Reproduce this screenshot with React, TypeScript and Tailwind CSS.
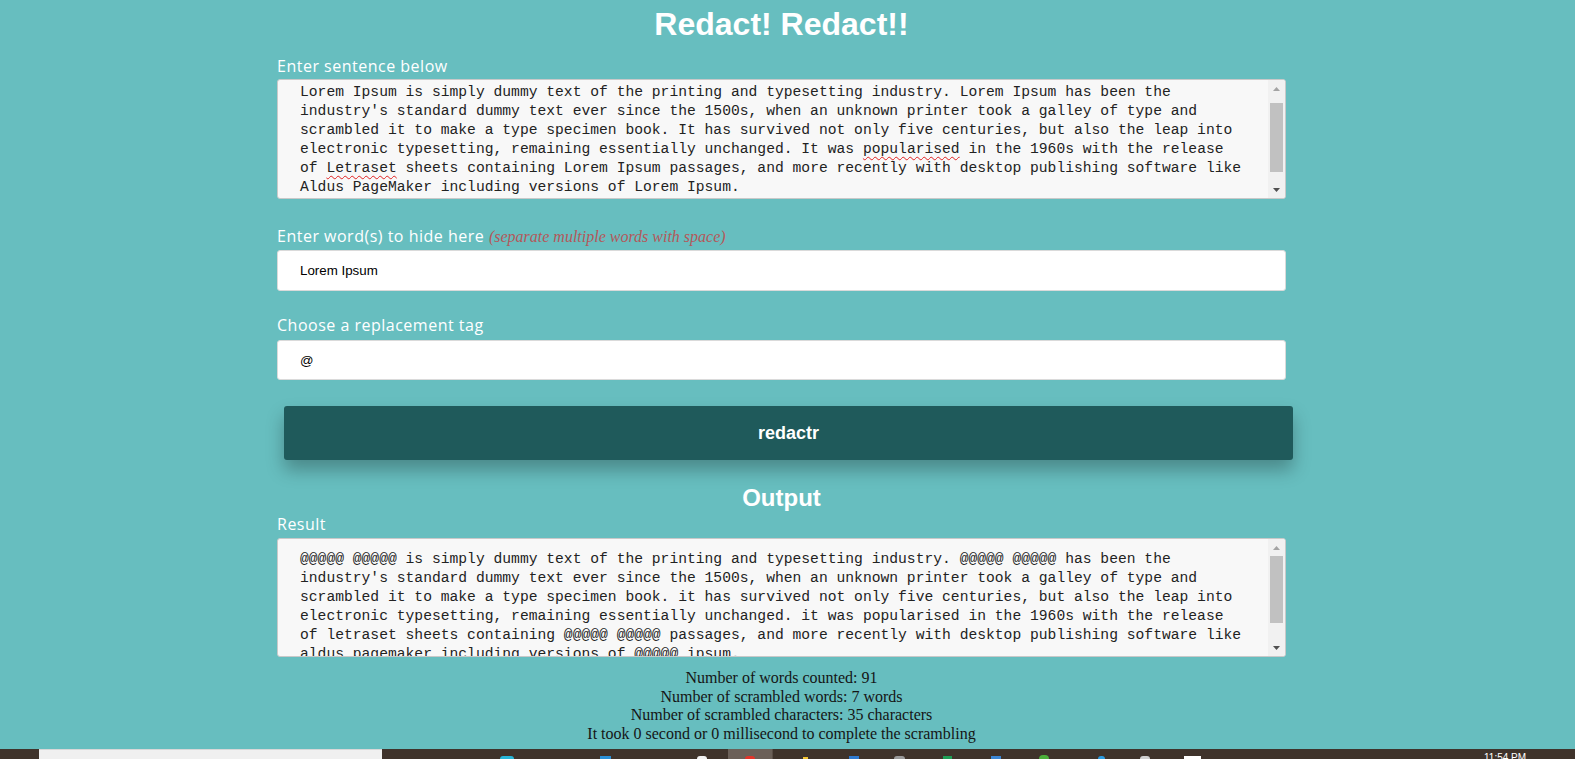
import React from "react";

const sentence = [
  "Lorem Ipsum is simply dummy text of the printing and typesetting industry. Lorem Ipsum has been the",
  "industry's standard dummy text ever since the 1500s, when an unknown printer took a galley of type and",
  "scrambled it to make a type specimen book. It has survived not only five centuries, but also the leap into",
];

const result = [
  "@@@@@ @@@@@ is simply dummy text of the printing and typesetting industry. @@@@@ @@@@@ has been the",
  "industry's standard dummy text ever since the 1500s, when an unknown printer took a galley of type and",
  "scrambled it to make a type specimen book. it has survived not only five centuries, but also the leap into",
  "electronic typesetting, remaining essentially unchanged. it was popularised in the 1960s with the release",
  "of letraset sheets containing @@@@@ @@@@@ passages, and more recently with desktop publishing software like",
  "aldus pagemaker including versions of @@@@@ ipsum.",
];

// fake windows style scrollbar, the textareas are drawn as divs
function ScrollBar({ thumbTop, thumbHeight }: { thumbTop: number; thumbHeight: number }) {
  return (
    <div className="w-[17px] flex flex-col bg-[#f1f1f1] shrink-0">
      <div className="h-[17px] flex items-center justify-center">
        <svg width="7" height="4" viewBox="0 0 7 4">
          <path d="M0 4 L3.5 0 L7 4 Z" fill="#a3a3a3" />
        </svg>
      </div>
      <div className="flex-1 px-[2px]">
        <div className="bg-[#c1c1c1]" style={{ marginTop: thumbTop, height: thumbHeight }} />
      </div>
      <div className="h-[17px] flex items-center justify-center">
        <svg width="7" height="4" viewBox="0 0 7 4">
          <path d="M0 0 L3.5 4 L7 0 Z" fill="#505050" />
        </svg>
      </div>
    </div>
  );
}

const squiggle = "underline decoration-wavy decoration-[#e02020] decoration-1 underline-offset-[3px]";
const labelCls = "block h-[20px] leading-[20px] text-[16px] tracking-[0.5px] text-white";

export default function App() {
  return (
    <div className="h-[759px] overflow-hidden bg-[#67bebf] flex flex-col font-['Open_Sans',sans-serif]">
      <main className="flex-1 pr-[12px]">
        <div className="mx-auto w-[1009px]">
          <h1 className="pt-[6px] text-center text-[32px] leading-[36px] font-bold text-white font-['Liberation_Sans',Arial,sans-serif]">
            Redact! Redact!!
          </h1>

          <label className={`${labelCls} mt-[14px]`}>Enter sentence below</label>
          <div className="mt-[3px] h-[120px] flex bg-[#f8f8f8] border border-[#c9c9c9] rounded-[3px] overflow-hidden">
            <div className="flex-1 pl-[22px] pt-[3px] font-['Liberation_Mono',monospace] text-[14.66px] leading-[19px] text-[#222] whitespace-pre overflow-hidden">
              {sentence.map((l) => (
                <div key={l}>{l}</div>
              ))}
              <div>
                electronic typesetting, remaining essentially unchanged. It was <span className={squiggle}>popularised</span> in the 1960s with the release
              </div>
              <div>
                of <span className={squiggle}>Letraset</span> sheets containing Lorem Ipsum passages, and more recently with desktop publishing software like
              </div>
              <div>Aldus PageMaker including versions of Lorem Ipsum.</div>
            </div>
            <ScrollBar thumbTop={6} thumbHeight={69} />
          </div>

          <label className={`${labelCls} mt-[27px]`}>
            Enter word(s) to hide here{" "}
            <em className="font-['Liberation_Serif',serif] text-[16px] tracking-normal text-[#b4585a]">(separate multiple words with space)</em>
          </label>
          <input
            readOnly
            value="Lorem Ipsum"
            className="block mt-[4px] w-full h-[41px] px-[22px] bg-white border border-[#dadada] rounded-[3px] font-['Liberation_Sans',Arial,sans-serif] text-[13.33px] text-black outline-none"
          />

          <label className={`${labelCls} mt-[24px]`}>Choose a replacement tag</label>
          <input
            readOnly
            value="@"
            className="block mt-[5px] w-full h-[40px] px-[22px] bg-white border border-[#dadada] rounded-[3px] font-['Liberation_Sans',Arial,sans-serif] text-[13.33px] text-black outline-none"
          />

          <button className="block mt-[26px] ml-[7px] w-[1009px] h-[54px] bg-[#1f5a5b] rounded-[3px] shadow-[0_10px_18px_rgba(0,0,0,0.28)] text-white text-[18px] font-bold font-['Liberation_Sans',Arial,sans-serif]">
            redactr
          </button>

          <h2 className="mt-[24px] text-center text-[24px] leading-[28px] font-bold text-white font-['Liberation_Sans',Arial,sans-serif]">
            Output
          </h2>

          <label className={`${labelCls} mt-[2px]`}>Result</label>
          <div className="mt-[4px] h-[119px] flex bg-[#f8f8f8] border border-[#c9c9c9] rounded-[3px] overflow-hidden">
            <div className="flex-1 pl-[22px] pt-[11px] font-['Liberation_Mono',monospace] text-[14.66px] leading-[19px] text-[#222] whitespace-pre overflow-hidden">
              {result.map((l) => (
                <div key={l}>{l}</div>
              ))}
            </div>
            <ScrollBar thumbTop={0} thumbHeight={67} />
          </div>

          <div className="mt-[12px] text-center font-['Liberation_Serif',serif] text-[16px] leading-[18.5px] text-[#151515]">
            <p>Number of words counted: 91</p>
            <p>Number of scrambled words: 7 words</p>
            <p>Number of scrambled characters: 35 characters</p>
            <p>It took 0 second or 0 millisecond to complete the scrambling</p>
          </div>
        </div>
      </main>

      {/* windows taskbar peeking in at the bottom */}
      <div className="h-[10px] bg-[#3f332b] flex items-start shrink-0">
        <div className="w-[39px]" />
        <div className="w-[343px] h-[10px] bg-[#f0f0f0] border-t border-[#d8d8d8]" />
        <div className="ml-[118px] mt-[7px] w-[14px] h-[3px] rounded-t-full bg-[#27b6d8]" />
        <div className="ml-[86px] mt-[7px] w-[11px] h-[3px] bg-[#2a8fd6]" />
        <div className="ml-[86px] mt-[7px] w-[10px] h-[3px] rounded-t-full bg-[#f2f2f2]" />
        <div className="ml-[21px] w-[44px] h-[10px] bg-[#6b6058] flex justify-center">
          <div className="mt-[7px] w-[10px] h-[3px] rounded-t-full bg-[#e0342a]" />
        </div>
        <div className="w-[1px] h-[10px] bg-[#5a4e46]" />
        <div className="ml-[30px] mt-[8px] w-[5px] h-[2px] bg-[#f4c430]" />
        <div className="ml-[41px] mt-[7px] w-[10px] h-[3px] bg-[#2f7ad0]" />
        <div className="ml-[35px] mt-[7px] w-[11px] h-[3px] rounded-t-full bg-[#9a9a9a]" />
        <div className="ml-[38px] mt-[7px] w-[9px] h-[3px] bg-[#1f9d55]" />
        <div className="ml-[39px] mt-[7px] w-[10px] h-[3px] bg-[#3b86d4]" />
        <div className="ml-[38px] mt-[6px] w-[10px] h-[4px] rounded-t-full bg-[#4caf3a]" />
        <div className="ml-[49px] mt-[7px] w-[7px] h-[3px] rounded-t-full bg-[#2a9ae0]" />
        <div className="ml-[35px] mt-[7px] w-[10px] h-[3px] rounded-t-full bg-[#cfcfcf]" />
        <div className="ml-[34px] mt-[7px] w-[17px] h-[3px] bg-white" />
        <div className="ml-[283px] mt-[4px] text-[10px] leading-[10px] text-white font-['Liberation_Sans',Arial,sans-serif]">11:54 PM</div>
      </div>
    </div>
  );
}
